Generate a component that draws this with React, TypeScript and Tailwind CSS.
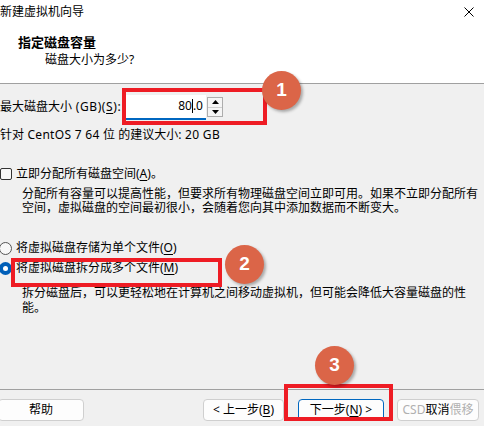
import React from "react";

function U({ children }: { children: React.ReactNode }) {
  return <span className="underline underline-offset-2">{children}</span>;
}

function Badge({ n, className }: { n: string; className: string }) {
  return (
    <div
      className={`absolute w-[39px] h-[39px] rounded-full bg-[#db6548] text-white text-[19px] font-bold flex items-center justify-center shadow-[2px_2px_3px_rgba(0,0,0,0.3)] font-['Liberation_Sans',sans-serif] ${className}`}
    >
      {n}
    </div>
  );
}

export default function App() {
  return (
    <div className="relative w-[484px] h-[426px] overflow-hidden bg-[#f0f0f0] text-black text-[12px] font-['Noto_Sans','Noto_Sans_CJK_SC',sans-serif] flex flex-col">
      {/* Header */}
      <div className="h-[84px] shrink-0 bg-white border-b border-[#a0a0a0]">
        <div className="h-[24px] flex items-center justify-between pr-[10px]">
          <span>新建虚拟机向导</span>
          <svg width="10" height="10" viewBox="0 0 10 10" className="text-black">
            <path d="M0.5 0.5 L9.5 9.5 M9.5 0.5 L0.5 9.5" stroke="currentColor" strokeWidth="1" />
          </svg>
        </div>
        <div className="mt-[9px] ml-[18px] leading-[18px] text-[13px] font-bold">指定磁盘容量</div>
        <div className="ml-[45px] leading-[18px]">磁盘大小为多少?</div>
      </div>

      {/* Body */}
      <div className="flex-1 flex flex-col">
        <div className="mt-[10px] h-[26px] flex items-center">
          <span className="w-[126px] whitespace-nowrap">
            最大磁盘大小<span className="tracking-[0.6px]"> (GB)(<U>S</U>):</span>
          </span>
          <div className="w-[80px] h-[25px] bg-white border-b-2 border-[#0067c0] flex items-center justify-end pr-[3px]">
            <span>80</span>
            <span className="w-px h-[14px] bg-black" />
            <span>.0</span>
          </div>
          <div className="ml-[1px] self-start mt-[3px] w-[16px] h-[20px] border border-[#adadad] bg-[#f5f5f5] flex flex-col">
            <div className="flex-1 flex items-center justify-center border-b border-[#d0d0d0]">
              <svg width="7" height="4" viewBox="0 0 7 4"><path d="M0 4 L3.5 0 L7 4 Z" fill="#000" /></svg>
            </div>
            <div className="flex-1 flex items-center justify-center">
              <svg width="7" height="4" viewBox="0 0 7 4"><path d="M0 0 L3.5 4 L7 0 Z" fill="#000" /></svg>
            </div>
          </div>
        </div>

        <div className="mt-[7px] leading-[16px] whitespace-nowrap">
          针对<span className="tracking-[0.3px]"> CentOS 7 64 </span>位 的建议大小<span className="tracking-[0.3px]">: 20 GB</span>
        </div>

        <div className="mt-[23px] h-[16px] flex items-center">
          <div className="w-[12px] h-[12px] rounded-[2px] border border-[#333] bg-[#f8f8f8]" />
          <span className="ml-[4px] whitespace-nowrap">
            立即分配所有磁盘空间(<U>A</U>)。
          </span>
        </div>
        <div className="mt-[5px] pl-[22px] leading-[14px] whitespace-nowrap">
          <div>分配所有容量可以提高性能，但要求所有物理磁盘空间立即可用。如果不立即分配所有</div>
          <div>空间，虚拟磁盘的空间最初很小，会随着您向其中添加数据而不断变大。</div>
        </div>

        <div className="mt-[25px] h-[16px] flex items-center">
          <div className="-ml-[1px] w-[13px] h-[13px] rounded-full border border-[#555] bg-[#f8f8f8]" />
          <span className="ml-[4px] whitespace-nowrap">
            将虚拟磁盘存储为单个文件(<U>O</U>)
          </span>
        </div>
        <div className="mt-[4px] h-[16px] flex items-center">
          <div className="-ml-[1px] w-[13px] h-[13px] rounded-full bg-[#005fb8] flex items-center justify-center">
            <div className="w-[5px] h-[5px] rounded-full bg-white" />
          </div>
          <span className="ml-[4px] whitespace-nowrap">
            将虚拟磁盘拆分成多个文件(<U>M</U>)
          </span>
        </div>
        <div className="mt-[9px] pl-[22px] leading-[15px] whitespace-nowrap">
          <div>拆分磁盘后，可以更轻松地在计算机之间移动虚拟机，但可能会降低大容量磁盘的性</div>
          <div>能。</div>
        </div>
      </div>

      {/* Footer */}
      <div className="h-[37px] shrink-0 border-t border-[#a0a0a0] pt-[9px] flex items-start">
        <button className="-ml-[2px] w-[86px] h-[22px] bg-[#fdfdfd] border border-[#cfcfcf] rounded-[4px] flex items-center justify-center">
          帮助
        </button>
        <button className="ml-[119px] w-[81px] h-[22px] bg-[#fdfdfd] border border-[#cfcfcf] rounded-[4px] flex items-center justify-center whitespace-nowrap">
          &lt; 上一步(<U>B</U>)
        </button>
        <button className="ml-[14px] w-[86px] h-[22px] bg-[#fdfdfd] border border-[#0067c0] rounded-[4px] flex items-center justify-center whitespace-nowrap">
          下一步(<U>N</U>) &gt;
        </button>
        <button className="ml-[13px] w-[82px] h-[22px] bg-[#fdfdfd] border border-[#cfcfcf] rounded-[4px] flex items-center justify-center whitespace-nowrap">
          <span className="text-[#b0b0b0]">CSD</span>
          <span>取消</span>
          <span className="text-[#b0b0b0]">偎移</span>
        </button>
      </div>

      {/* Annotations */}
      <div className="absolute left-[122px] top-[88px] w-[145px] h-[37px] border-4 border-[#ee1c24]" />
      <div className="absolute left-[11px] top-[258px] w-[211px] h-[29px] border-4 border-[#ee1c24]" />
      <div className="absolute left-[284px] top-[384px] w-[109px] h-[37px] border-4 border-[#ee1c24]" />
      <Badge n="1" className="left-[262px] top-[71px]" />
      <Badge n="2" className="left-[225px] top-[245px]" />
      <Badge n="3" className="left-[315px] top-[346px]" />
    </div>
  );
}
